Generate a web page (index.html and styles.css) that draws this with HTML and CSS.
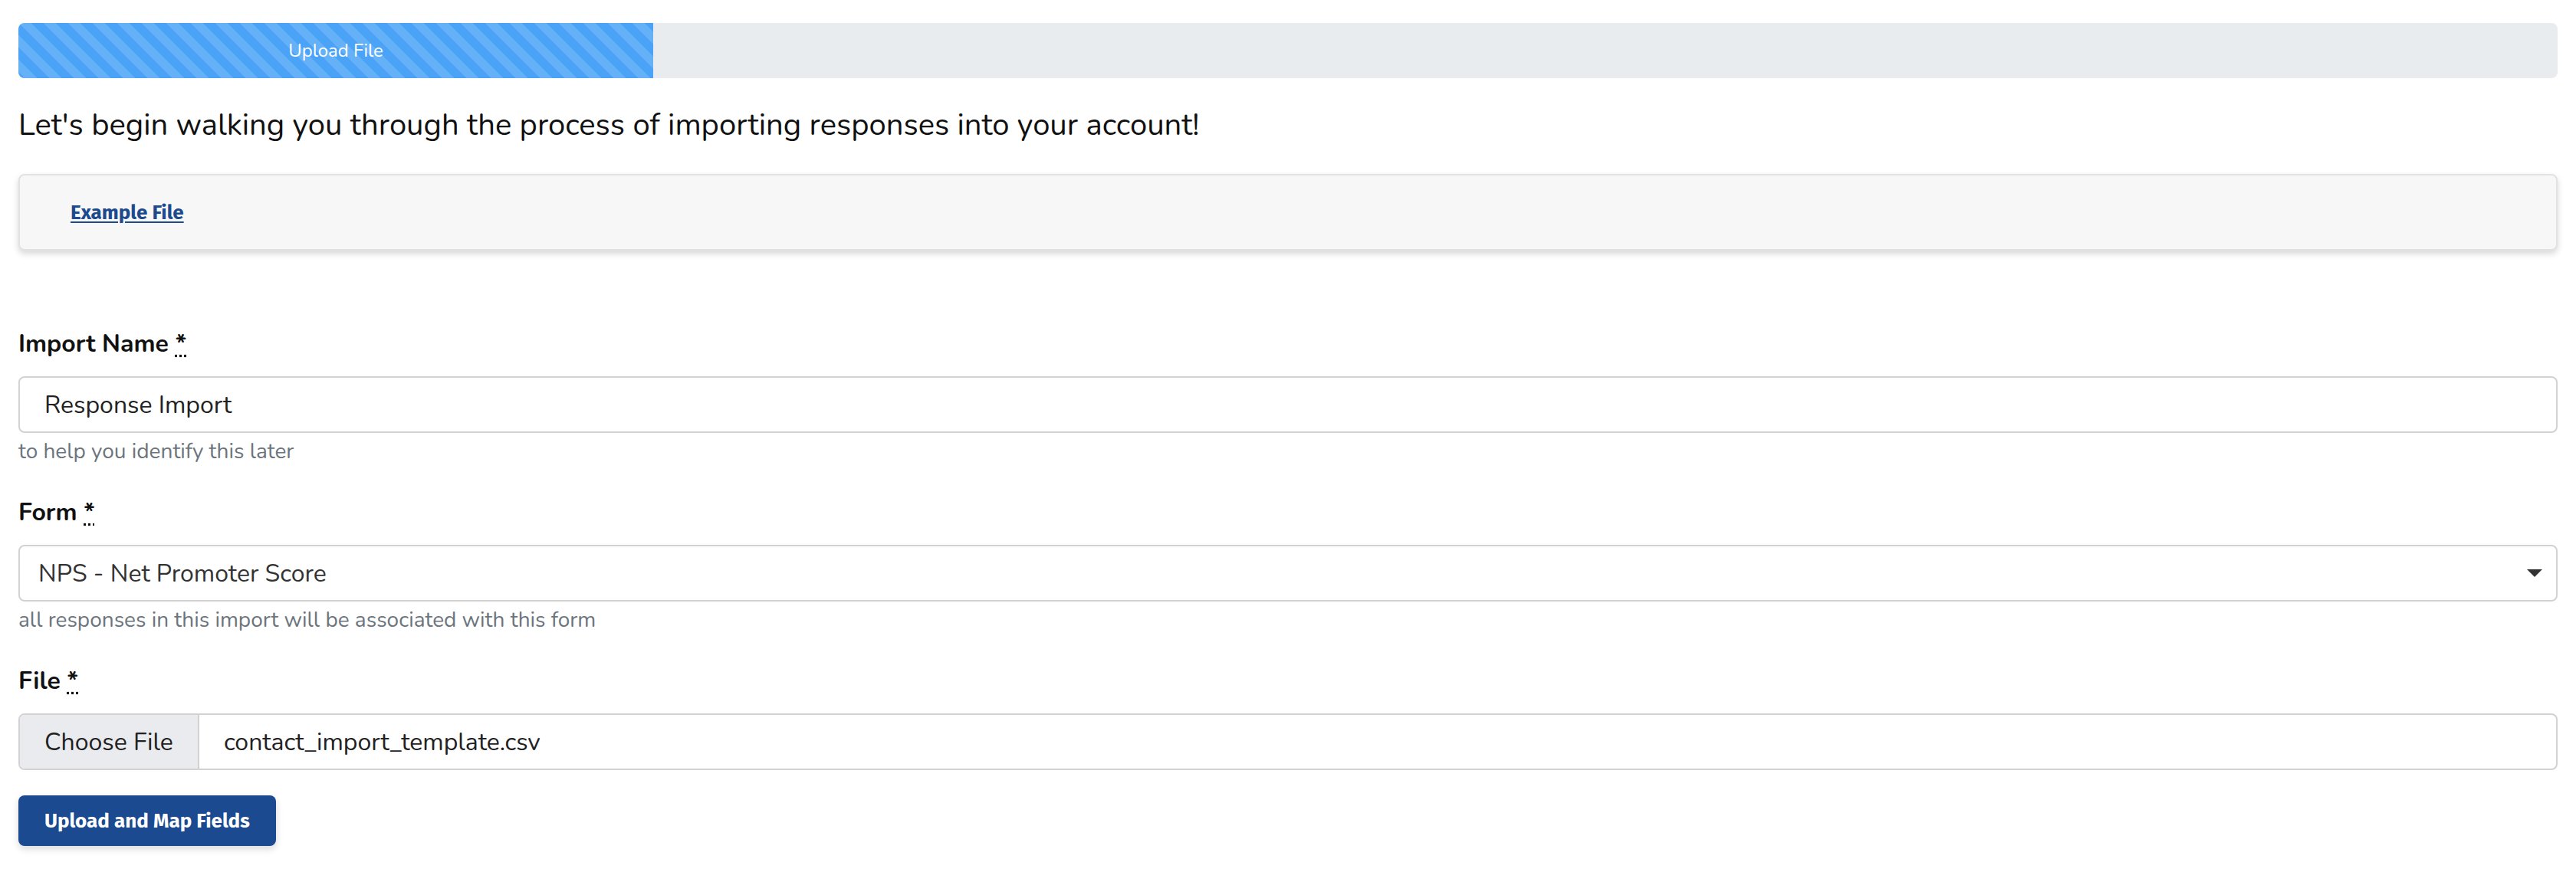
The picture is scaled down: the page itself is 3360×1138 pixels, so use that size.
FILE: index.html
```html
<!DOCTYPE html>
<html lang="en">
<head>
    <meta charset="UTF-8">
    <meta name="viewport" content="width=device-width, initial-scale=1.0">
    <title>Import Responses - Upload File</title>
    <link rel="stylesheet" href="styles.css">
</head>
<body>
    <div class="container">
        <!-- Wizard progress -->
        <div class="progress">
            <div class="progress-bar" style="width: 25%">Upload File</div>
        </div>

        <p class="intro">Let's begin walking you through the process of importing responses into your account!</p>

        <div class="card">
            <a href="#" class="card-link">Example File</a>
        </div>

        <form class="import-form" onsubmit="return false">
            <div class="form-group">
                <label class="field-label" for="importName">Import Name <abbr title="required">*</abbr></label>
                <input type="text" id="importName" class="form-control text-input" value="Response Import">
                <small class="form-text">to help you identify this later</small>
            </div>

            <div class="form-group">
                <label class="field-label" for="formSelect">Form <abbr title="required">*</abbr></label>
                <div class="select-wrap">
                    <select id="formSelect" class="form-control select-input">
                        <option>NPS - Net Promoter Score</option>
                    </select>
                </div>
                <small class="form-text">all responses in this import will be associated with this form</small>
            </div>

            <div class="form-group last">
                <label class="field-label" for="fileInput">File <abbr title="required">*</abbr></label>
                <div class="file-input" onclick="document.getElementById('fileInput').click()">
                    <span class="file-button">Choose File</span>
                    <span class="file-name">contact_import_template.csv</span>
                    <input type="file" id="fileInput" class="file-hidden">
                </div>
            </div>

            <button type="submit" class="btn-primary">Upload and Map Fields</button>
        </form>
    </div>
</body>
</html>
```

FILE: styles.css
```css
body {
    margin: 0;
    padding: 0;
    background: #fff;
    color: #111;
    font-family: 'Nunito', 'Lato', sans-serif;
}

.container {
    padding: 30px 24px 20px;
}

/* Progress */
.progress {
    display: flex;
    height: 72px;
    background-color: #e9ecef;
    border-radius: 8px;
    overflow: hidden;
}

.progress-bar {
    display: flex;
    align-items: center;
    justify-content: center;
    color: #fff;
    font-size: 24px;
    background-color: #4aa3f7;
    background-image: linear-gradient(45deg, rgba(255, 255, 255, 0.15) 25%, transparent 25%, transparent 50%, rgba(255, 255, 255, 0.15) 50%, rgba(255, 255, 255, 0.15) 75%, transparent 75%, transparent);
    background-size: 32px 32px;
}

.intro {
    font-size: 40px;
    line-height: 54px;
    margin: 34px 0 37px;
}

/* Example card */
.card {
    display: flex;
    align-items: center;
    height: 96px;
    padding: 0 66px;
    background: #f7f7f7;
    border: 2px solid #e2e2e2;
    border-radius: 8px;
    box-shadow: 0 4px 8px rgba(0, 0, 0, 0.16);
}

.card-link {
    font-family: 'Fira Sans', 'Lato', sans-serif;
    font-weight: bold;
    font-size: 26px;
    color: #1d4a8c;
    text-decoration: underline;
    text-underline-offset: 3px;
}

/* Form */
.import-form {
    margin-top: 98px;
}

.form-group {
    display: flex;
    flex-direction: column;
    margin-bottom: 36px;
}

.form-group.last {
    margin-bottom: 33px;
}

.field-label {
    font-size: 32px;
    line-height: 48px;
    font-weight: bold;
    margin-bottom: 18px;
}

abbr {
    text-decoration: underline dotted;
    text-underline-offset: 4px;
    cursor: help;
}

.form-control {
    box-sizing: border-box;
    width: 100%;
    height: 74px;
    font-family: inherit;
    font-size: 32px;
    color: #222;
    background: #fff;
    border: 2px solid #d2d2d2;
    border-radius: 8px;
    outline: none;
}

.text-input {
    padding: 0 32px;
}

.select-wrap {
    position: relative;
}

.select-input {
    appearance: none;
    -webkit-appearance: none;
    padding: 0 24px;
    color: #333;
}

.select-wrap::after {
    content: '';
    position: absolute;
    right: 20px;
    top: 32px;
    border-left: 10px solid transparent;
    border-right: 10px solid transparent;
    border-top: 10px solid #333;
    pointer-events: none;
}

.form-text {
    font-size: 28px;
    line-height: 39px;
    margin-top: 5px;
    color: #6c757d;
}

/* File picker */
.file-input {
    display: flex;
    box-sizing: border-box;
    height: 74px;
    font-size: 32px;
    color: #222;
    border: 2px solid #d2d2d2;
    border-radius: 8px;
    overflow: hidden;
    cursor: pointer;
}

.file-button {
    display: flex;
    align-items: center;
    padding: 0 32px;
    background: #e9ebef;
    border-right: 2px solid #d2d2d2;
}

.file-name {
    display: flex;
    align-items: center;
    padding-left: 32px;
}

.file-hidden {
    display: none;
}

/* Button */
.btn-primary {
    height: 66px;
    padding: 0 34px;
    font-family: 'Fira Sans', 'Lato', sans-serif;
    font-weight: bold;
    font-size: 26px;
    color: #fff;
    background: #1b4a91;
    border: none;
    border-radius: 8px;
    box-shadow: 0 4px 10px rgba(0, 0, 0, 0.15);
    cursor: pointer;
}
```
